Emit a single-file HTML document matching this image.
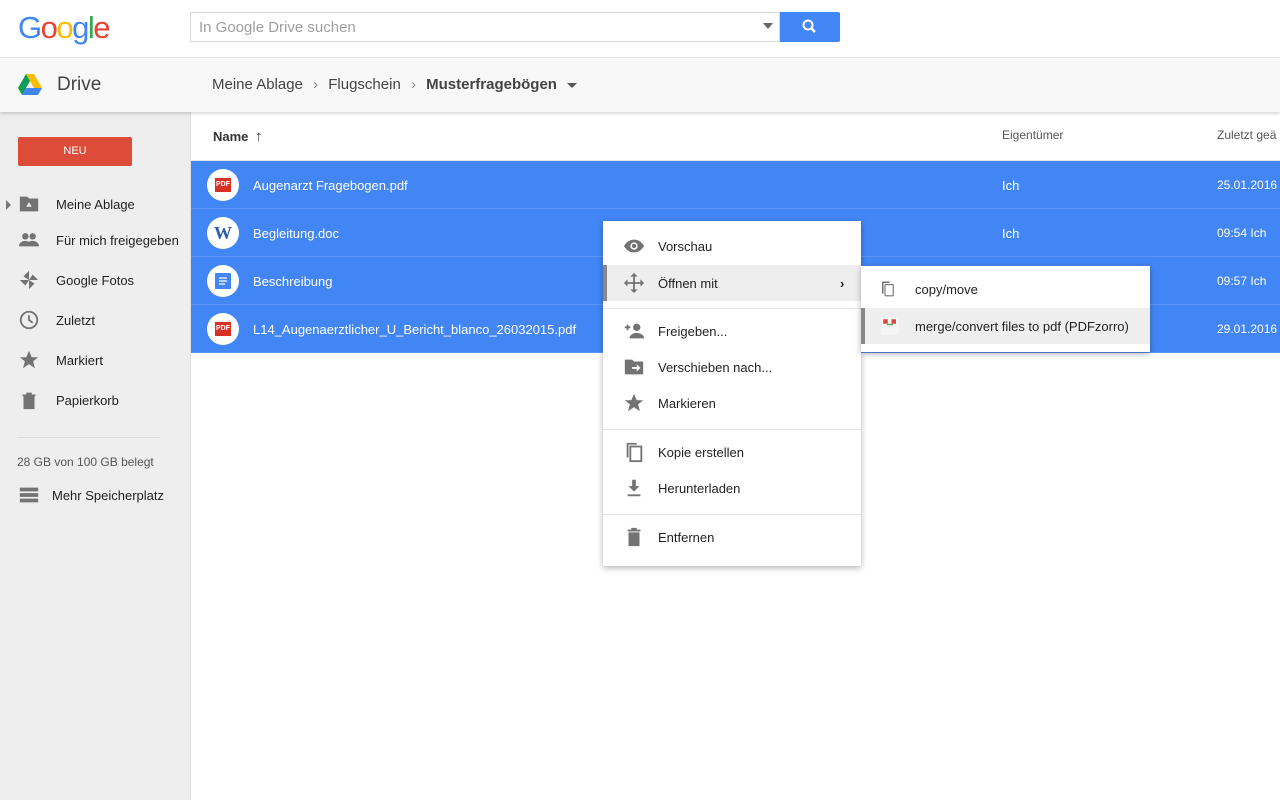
<!DOCTYPE html>
<html><head><meta charset="utf-8"><style>
*{box-sizing:border-box;margin:0;padding:0}
body{width:1280px;height:800px;overflow:hidden;font-family:"Liberation Sans",Arial,sans-serif;background:#fff;position:relative;color:#333}
.abs{position:absolute}
.top{left:0;top:0;width:1280px;height:58px;background:#fff;border-bottom:1px solid #e5e5e5}
.bar2{left:0;top:58px;width:1280px;height:54px;background:#f8f8f8;box-shadow:0 2px 3px rgba(0,0,0,.15);z-index:2}
.side{left:0;top:112px;width:191px;height:688px;background:#eeeeee;border-right:1px solid #ddd}
.nav{position:absolute;left:18px;font-size:13px;color:#222;display:flex;align-items:center}
.nav svg{width:22px;height:22px;margin-right:16px}
.row{left:191px;width:1089px;height:48px;background:#4285f4;border-bottom:1px solid #5a95f5;color:#fff;font-size:13px}
.row .ic{position:absolute;left:16px;top:8px;width:32px;height:32px;border-radius:50%;background:#fff;display:flex;align-items:center;justify-content:center}
.row .n{position:absolute;left:62px;top:17px}
.row .o{position:absolute;left:811px;top:17px}
.row .d{position:absolute;left:1026px;top:17px;font-size:12px}
.pdf{width:16px;height:14px;background:#d93025;color:#fff;font-size:7px;font-weight:bold;text-align:center;line-height:14px}
.menu{left:603px;top:221px;width:258px;height:345px;background:#fff;box-shadow:0 2px 6px rgba(0,0,0,.3);z-index:5;font-size:13px;color:#222}
.mi{position:absolute;left:0;width:258px;height:36px;display:flex;align-items:center}
.mi svg{position:absolute;left:20px;width:22px;height:22px}
.mi span{position:absolute;left:55px}
.sep{position:absolute;left:0;width:258px;height:1px;background:#e5e5e5}
.sub{left:861px;top:266px;width:289px;height:86px;background:#fff;box-shadow:0 2px 6px rgba(0,0,0,.3);z-index:6;font-size:13px;color:#222}
</style></head><body>
<div class="abs top">
 <div class="abs" style="left:18px;top:10px;font-size:31px;letter-spacing:-1.5px;font-family:'Liberation Sans',sans-serif"><span style="color:#4285f4">G</span><span style="color:#ea4335">o</span><span style="color:#fbbc05">o</span><span style="color:#4285f4">g</span><span style="color:#34a853">l</span><span style="color:#ea4335">e</span></div>
 <div class="abs" style="left:190px;top:12px;width:590px;height:30px;border:1px solid #d9d9d9;background:#fff"><span style="position:absolute;left:8px;top:6px;font-size:15px;color:#9e9e9e">In Google Drive suchen</span><span style="position:absolute;right:6px;top:10px;border-left:5px solid transparent;border-right:5px solid transparent;border-top:6px solid #666"></span></div>
 <div class="abs" style="left:780px;top:12px;width:60px;height:30px;background:#4285f4;border-radius:0 2px 2px 0"><svg width="60" height="30"><circle cx="28" cy="13" r="4.5" fill="none" stroke="#fff" stroke-width="2"/><line x1="31" y1="16" x2="35" y2="20" stroke="#fff" stroke-width="2.5"/></svg></div>
</div>
<div class="abs bar2">
 <svg class="abs" style="left:18px;top:16px" width="24" height="22" viewBox="0 0 24 22"><polygon points="8,0 16,0 24,14 20,21" fill="#fbbc05"/><polygon points="8,0 0,14 4,21 12,7" fill="#0f9d58"/><polygon points="4,21 20,21 24,14 8,14" fill="#4285f4"/></svg>
 <div class="abs" style="left:57px;top:16px;font-size:19px;color:#444">Drive</div>
 <div class="abs" style="left:212px;top:18px;font-size:15px;color:#444">Meine Ablage <span style="color:#888;margin:0 6px">&#8250;</span> Flugschein <span style="color:#888;margin:0 6px">&#8250;</span> <b>Musterfragebögen</b> <span style="display:inline-block;margin-left:6px;vertical-align:middle;border-left:5px solid transparent;border-right:5px solid transparent;border-top:5px solid #555"></span></div>
</div>
<div class="abs side">
 <div class="abs" style="left:18px;top:25px;width:114px;height:29px;background:#dd4b39;border-radius:2px;color:#fff;font-size:11px;text-align:center;line-height:29px">NEU</div>
 <div class="abs" style="left:6px;top:88px;border-top:5px solid transparent;border-bottom:5px solid transparent;border-left:5px solid #777"></div>
 <div class="nav" style="top:81px"><svg viewBox="0 0 24 24"><path d="M2 4h8l2 2h10v14H2z" fill="#737373"/><path d="M12 10l3 5h-6z" fill="#eee"/></svg>Meine Ablage</div>
 <div class="nav" style="top:117px"><svg viewBox="0 0 24 24"><circle cx="8" cy="8" r="3.5" fill="#737373"/><circle cx="16" cy="8" r="3.5" fill="#737373"/><path d="M1 19c0-4 4-6 7-6s7 2 7 6zM13 19c0-2 0-4-1-5 1-1 3-1 4-1 3 0 7 2 7 6z" fill="#737373"/></svg>Für mich freigegeben</div>
 <div class="nav" style="top:157px"><svg viewBox="0 0 24 24"><g fill="#737373"><path d="M12 12V2L6 8z"/><path d="M12 12H22L16 6z"/><path d="M12 12V22L18 16z"/><path d="M12 12H2L8 18z"/></g></svg>Google Fotos</div>
 <div class="nav" style="top:197px"><svg viewBox="0 0 24 24"><circle cx="12" cy="12" r="9" fill="none" stroke="#737373" stroke-width="2"/><path d="M12 7v5l4 3" fill="none" stroke="#737373" stroke-width="2"/></svg>Zuletzt</div>
 <div class="nav" style="top:237px"><svg viewBox="0 0 24 24"><path d="M12 2l3 7h7l-5.5 4.5 2 7.5L12 16.5 5.5 21l2-7.5L2 9h7z" fill="#737373"/></svg>Markiert</div>
 <div class="nav" style="top:277px"><svg viewBox="0 0 24 24"><path d="M5 6h14v2H5zM9 4h6v2H9zM6 8h12v14H6z" fill="#737373"/></svg>Papierkorb</div>
 <div class="abs" style="left:17px;top:325px;width:143px;height:1px;background:#ddd"></div>
 <div class="abs" style="left:17px;top:343px;font-size:12px;color:#555">28 GB von 100 GB belegt</div>
 <div class="nav" style="top:372px"><svg viewBox="0 0 24 24" style="margin-right:12px"><path d="M2 4h20v4H2zM2 10h20v4H2zM2 16h20v4H2z" fill="#737373"/></svg>Mehr Speicherplatz</div>
</div>
<div class="abs" style="left:213px;top:128px;font-size:13px;color:#333;font-weight:bold">Name <span style="font-weight:normal;font-size:15px;margin-left:3px">&#8593;</span></div>
<div class="abs" style="left:1002px;top:128px;font-size:12px;color:#555">Eigentümer</div>
<div class="abs" style="left:1217px;top:128px;font-size:12px;color:#555;white-space:nowrap">Zuletzt geä</div>
<div class="abs" style="left:191px;top:160px;width:1089px;height:1px;background:#e5e5e5"></div>
<div class="abs row" style="top:161px"><div class="ic"><div class="pdf">PDF</div></div><div class="n">Augenarzt Fragebogen.pdf</div><div class="o">Ich</div><div class="d">25.01.2016</div></div>
<div class="abs row" style="top:209px"><div class="ic"><b style="color:#2a5caa;font-size:18px;font-family:'Liberation Serif',serif">W</b></div><div class="n">Begleitung.doc</div><div class="o">Ich</div><div class="d">09:54 Ich</div></div>
<div class="abs row" style="top:257px"><div class="ic"><svg width="16" height="16"><rect width="16" height="16" rx="1" fill="#4285f4"/><path d="M4 5h8M4 8h8M4 11h6" stroke="#fff" stroke-width="1.3"/></svg></div><div class="n">Beschreibung</div><div class="o">Ich</div><div class="d">09:57 Ich</div></div>
<div class="abs row" style="top:305px"><div class="ic"><div class="pdf">PDF</div></div><div class="n">L14_Augenaerztlicher_U_Bericht_blanco_26032015.pdf</div><div class="o">Ich</div><div class="d">29.01.2016</div></div>
<div class="abs menu">
 <div class="mi" style="top:7px"><svg viewBox="0 0 24 24"><path d="M1 12c3-5 7-7 11-7s8 2 11 7c-3 5-7 7-11 7S4 17 1 12z" fill="#737373"/><circle cx="12" cy="12" r="4" fill="#fff"/><circle cx="12" cy="12" r="2.3" fill="#737373"/></svg><span>Vorschau</span></div>
 <div class="mi" style="top:44px;background:#eeeeee;border-left:4px solid #888"><svg viewBox="0 0 24 24" style="left:16px"><path d="M12 1l4 4H8zM12 23l-4-4h8zM1 12l4-4v8zM23 12l-4 4V8z" fill="#737373"/><path d="M12 5v14M5 12h14" stroke="#737373" stroke-width="2"/></svg><span style="left:51px">Öffnen mit</span><span style="left:233px;font-weight:bold">&#8250;</span></div>
 <div class="sep" style="top:87px"></div>
 <div class="mi" style="top:92px"><svg viewBox="0 0 24 24"><circle cx="15" cy="8" r="4" fill="#737373"/><path d="M7 20c0-4 5-6 8-6s8 2 8 6z" fill="#737373"/><path d="M5 5v6M2 8h6" stroke="#737373" stroke-width="2"/></svg><span>Freigeben...</span></div>
 <div class="mi" style="top:128px"><svg viewBox="0 0 24 24"><path d="M2 4h8l2 2h10v14H2z" fill="#737373"/><path d="M10 12h5v-3l4 4-4 4v-3h-5z" fill="#fff"/></svg><span>Verschieben nach...</span></div>
 <div class="mi" style="top:164px"><svg viewBox="0 0 24 24"><path d="M12 2l3 7h7l-5.5 4.5 2 7.5L12 16.5 5.5 21l2-7.5L2 9h7z" fill="#737373"/></svg><span>Markieren</span></div>
 <div class="sep" style="top:208px"></div>
 <div class="mi" style="top:213px"><svg viewBox="0 0 24 24"><path d="M4 2h11v2H6v14H4z" fill="#737373"/><rect x="8" y="6" width="12" height="16" fill="none" stroke="#737373" stroke-width="2"/></svg><span>Kopie erstellen</span></div>
 <div class="mi" style="top:249px"><svg viewBox="0 0 24 24"><path d="M10 3h4v7h4l-6 6-6-6h4zM5 19h14v2H5z" fill="#737373"/></svg><span>Herunterladen</span></div>
 <div class="sep" style="top:293px"></div>
 <div class="mi" style="top:298px"><svg viewBox="0 0 24 24"><path d="M5 4h14v2H5zM9 2h6v2H9zM6 7h12v15H6z" fill="#737373"/></svg><span>Entfernen</span></div>
</div>
<div class="abs sub">
 <div class="mi" style="top:5px;width:289px"><svg viewBox="0 0 24 24" style="left:18px;width:18px"><path d="M4 2h10v2H6v14H4z" fill="#737373"/><rect x="8" y="6" width="11" height="15" rx="1" fill="none" stroke="#737373" stroke-width="1.5"/></svg><span style="left:54px">copy/move</span></div>
 <div class="mi" style="top:42px;width:289px;background:#eeeeee;border-left:4px solid #888"><svg viewBox="0 0 24 24" style="left:16px;width:18px"><rect width="24" height="24" fill="#f4f4f4"/><rect x="3" y="3" width="6" height="6" fill="#d44"/><rect x="14" y="3" width="6" height="6" fill="#d44"/><path d="M8 10l8 0" stroke="#5a5" stroke-width="2"/></svg><span style="left:50px">merge/convert files to pdf (PDFzorro)</span></div>
</div>
</body></html>
